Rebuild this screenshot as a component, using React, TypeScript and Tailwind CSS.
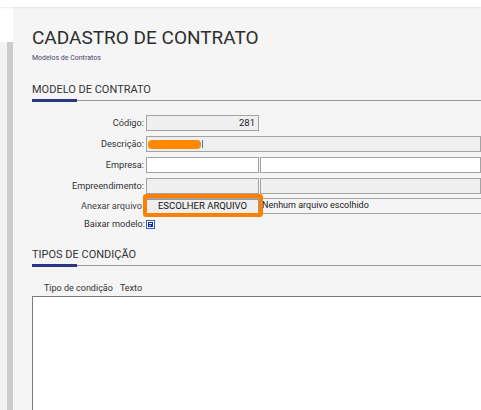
import React from 'react';

function SectionTitle({ title }: { title: string }) {
  return (
    <div>
      <h2 className="text-[11px] leading-[13px] text-[#333]">{title}</h2>
      <div className="mt-[3px] flex items-center">
        <div className="h-[3px] w-[45px] bg-[#2b3583]" />
        <div className="h-px flex-1 bg-[#9a9a9a]" />
      </div>
    </div>
  );
}

function Row({ label, children, className = '' }: { label: string; children?: React.ReactNode; className?: string }) {
  return (
    <div className={`flex h-[16px] items-center ${className}`}>
      <label className="w-[113px] shrink-0 pr-[1px] text-right text-[9.2px] leading-[12px] text-[#333]">{label}</label>
      <div className="ml-[1px] flex h-full flex-1 items-stretch">{children}</div>
    </div>
  );
}

const boxGray = 'border border-[#a3a3a3] bg-[#efefef]';
const boxWhite = 'border border-[#a3a3a3] bg-white';

export default function App() {
  return (
    <div className="relative flex h-[410px] w-[481px] flex-col overflow-hidden bg-[#f5f5f5] font-['Roboto',sans-serif]">
      <div className="relative z-10 h-[7px] shrink-0 bg-white shadow-[0_1px_2px_rgba(0,0,0,0.08)]" />
      <div className="flex flex-1">
        <aside className="flex w-[13px] shrink-0 flex-col">
          <div className="h-[35px] bg-white" />
          <div className="flex flex-1">
            <div className="w-[7px] bg-[#f2f2f2]" />
            <div className="w-[6px] bg-[#cdcdcd]" />
          </div>
        </aside>

        <main className="flex flex-1 flex-col pl-[19px] pt-[20px]">
          <h1 className="text-[19px] leading-[22px] text-[#2e2e2e]">CADASTRO DE CONTRATO</h1>
          <p className="mt-[5px] text-[7px] leading-[9px] text-[#4a4466]">Modelos de Contratos</p>

          <div className="mt-[20px]">
            <SectionTitle title="MODELO DE CONTRATO" />
          </div>

          <div className="relative mt-[13px] flex flex-col">
            <Row label="Código:">
              <div className={`${boxGray} w-[113px] pr-[3px] text-right text-[9.5px] leading-[14px] text-[#222]`}>281</div>
            </Row>
            <Row label="Descrição:" className="mt-[5px]">
              <div className={`${boxGray} flex flex-1 items-center pl-[1px]`}>
                <div className="h-[9px] w-[53px] rounded-[4px] bg-[#ff8a00]" />
                <div className="ml-[1px] h-[8px] w-[1px] bg-[#3a7be0]" />
              </div>
            </Row>
            <Row label="Empresa:" className="mt-[5px]">
              <div className={`${boxWhite} w-[113px]`} />
              <div className={`${boxWhite} ml-[1px] flex-1`} />
            </Row>
            <Row label="Empreendimento:" className="mt-[5px]">
              <div className={`${boxGray} w-[113px]`} />
              <div className={`${boxGray} ml-[1px] flex-1`} />
            </Row>
            <div className="mt-[4px] flex h-[16px] items-center">
              <label className="w-[110px] shrink-0 text-right text-[9.2px] leading-[12px] text-[#444]">Anexar arquivo</label>
              <div className="ml-[4px] flex h-full flex-1 items-center border-y border-[#a3a3a3]">
                <div className="flex h-[15px] w-[113px] items-center justify-center border border-[#9a9a9a] bg-[#efefef] text-[9.5px] text-[#111]">
                  ESCOLHER ARQUIVO
                </div>
                <span className="ml-[3px] text-[9px] text-[#222]">Nenhum arquivo escolhido</span>
              </div>
            </div>
            <div className="mt-[4px] flex h-[12px] items-center">
              <label className="w-[113px] shrink-0 text-right text-[9.2px] leading-[12px] text-[#333]">Baixar modelo:</label>
              <svg width="9" height="9" viewBox="0 0 9 9" className="ml-[1px]">
                <rect x="0.5" y="0.5" width="8" height="8" fill="#fff" stroke="#2f5fd0" />
                <rect x="2" y="2" width="5" height="5" fill="#1c2f8a" />
                <rect x="3" y="3" width="3" height="1" fill="#fff" />
                <rect x="3" y="5" width="2" height="1" fill="#9fb5f0" />
              </svg>
            </div>
            <div className="pointer-events-none absolute left-[111px] top-[79px] h-[23px] w-[120px] rounded-[3px] border-[4px] border-[#ff7f00]" />
          </div>

          <div className="mt-[18px]">
            <SectionTitle title="TIPOS DE CONDIÇÃO" />
          </div>

          <div className="mt-[15px] flex pl-[12px] text-[9px] leading-[12px] text-[#333]">
            <span>Tipo de condição</span>
            <span className="ml-[7px]">Texto</span>
          </div>
          <div className="mt-[2px] flex-1 border-l border-t border-[#7a7a7a] bg-white" />
        </main>
      </div>
    </div>
  );
}
